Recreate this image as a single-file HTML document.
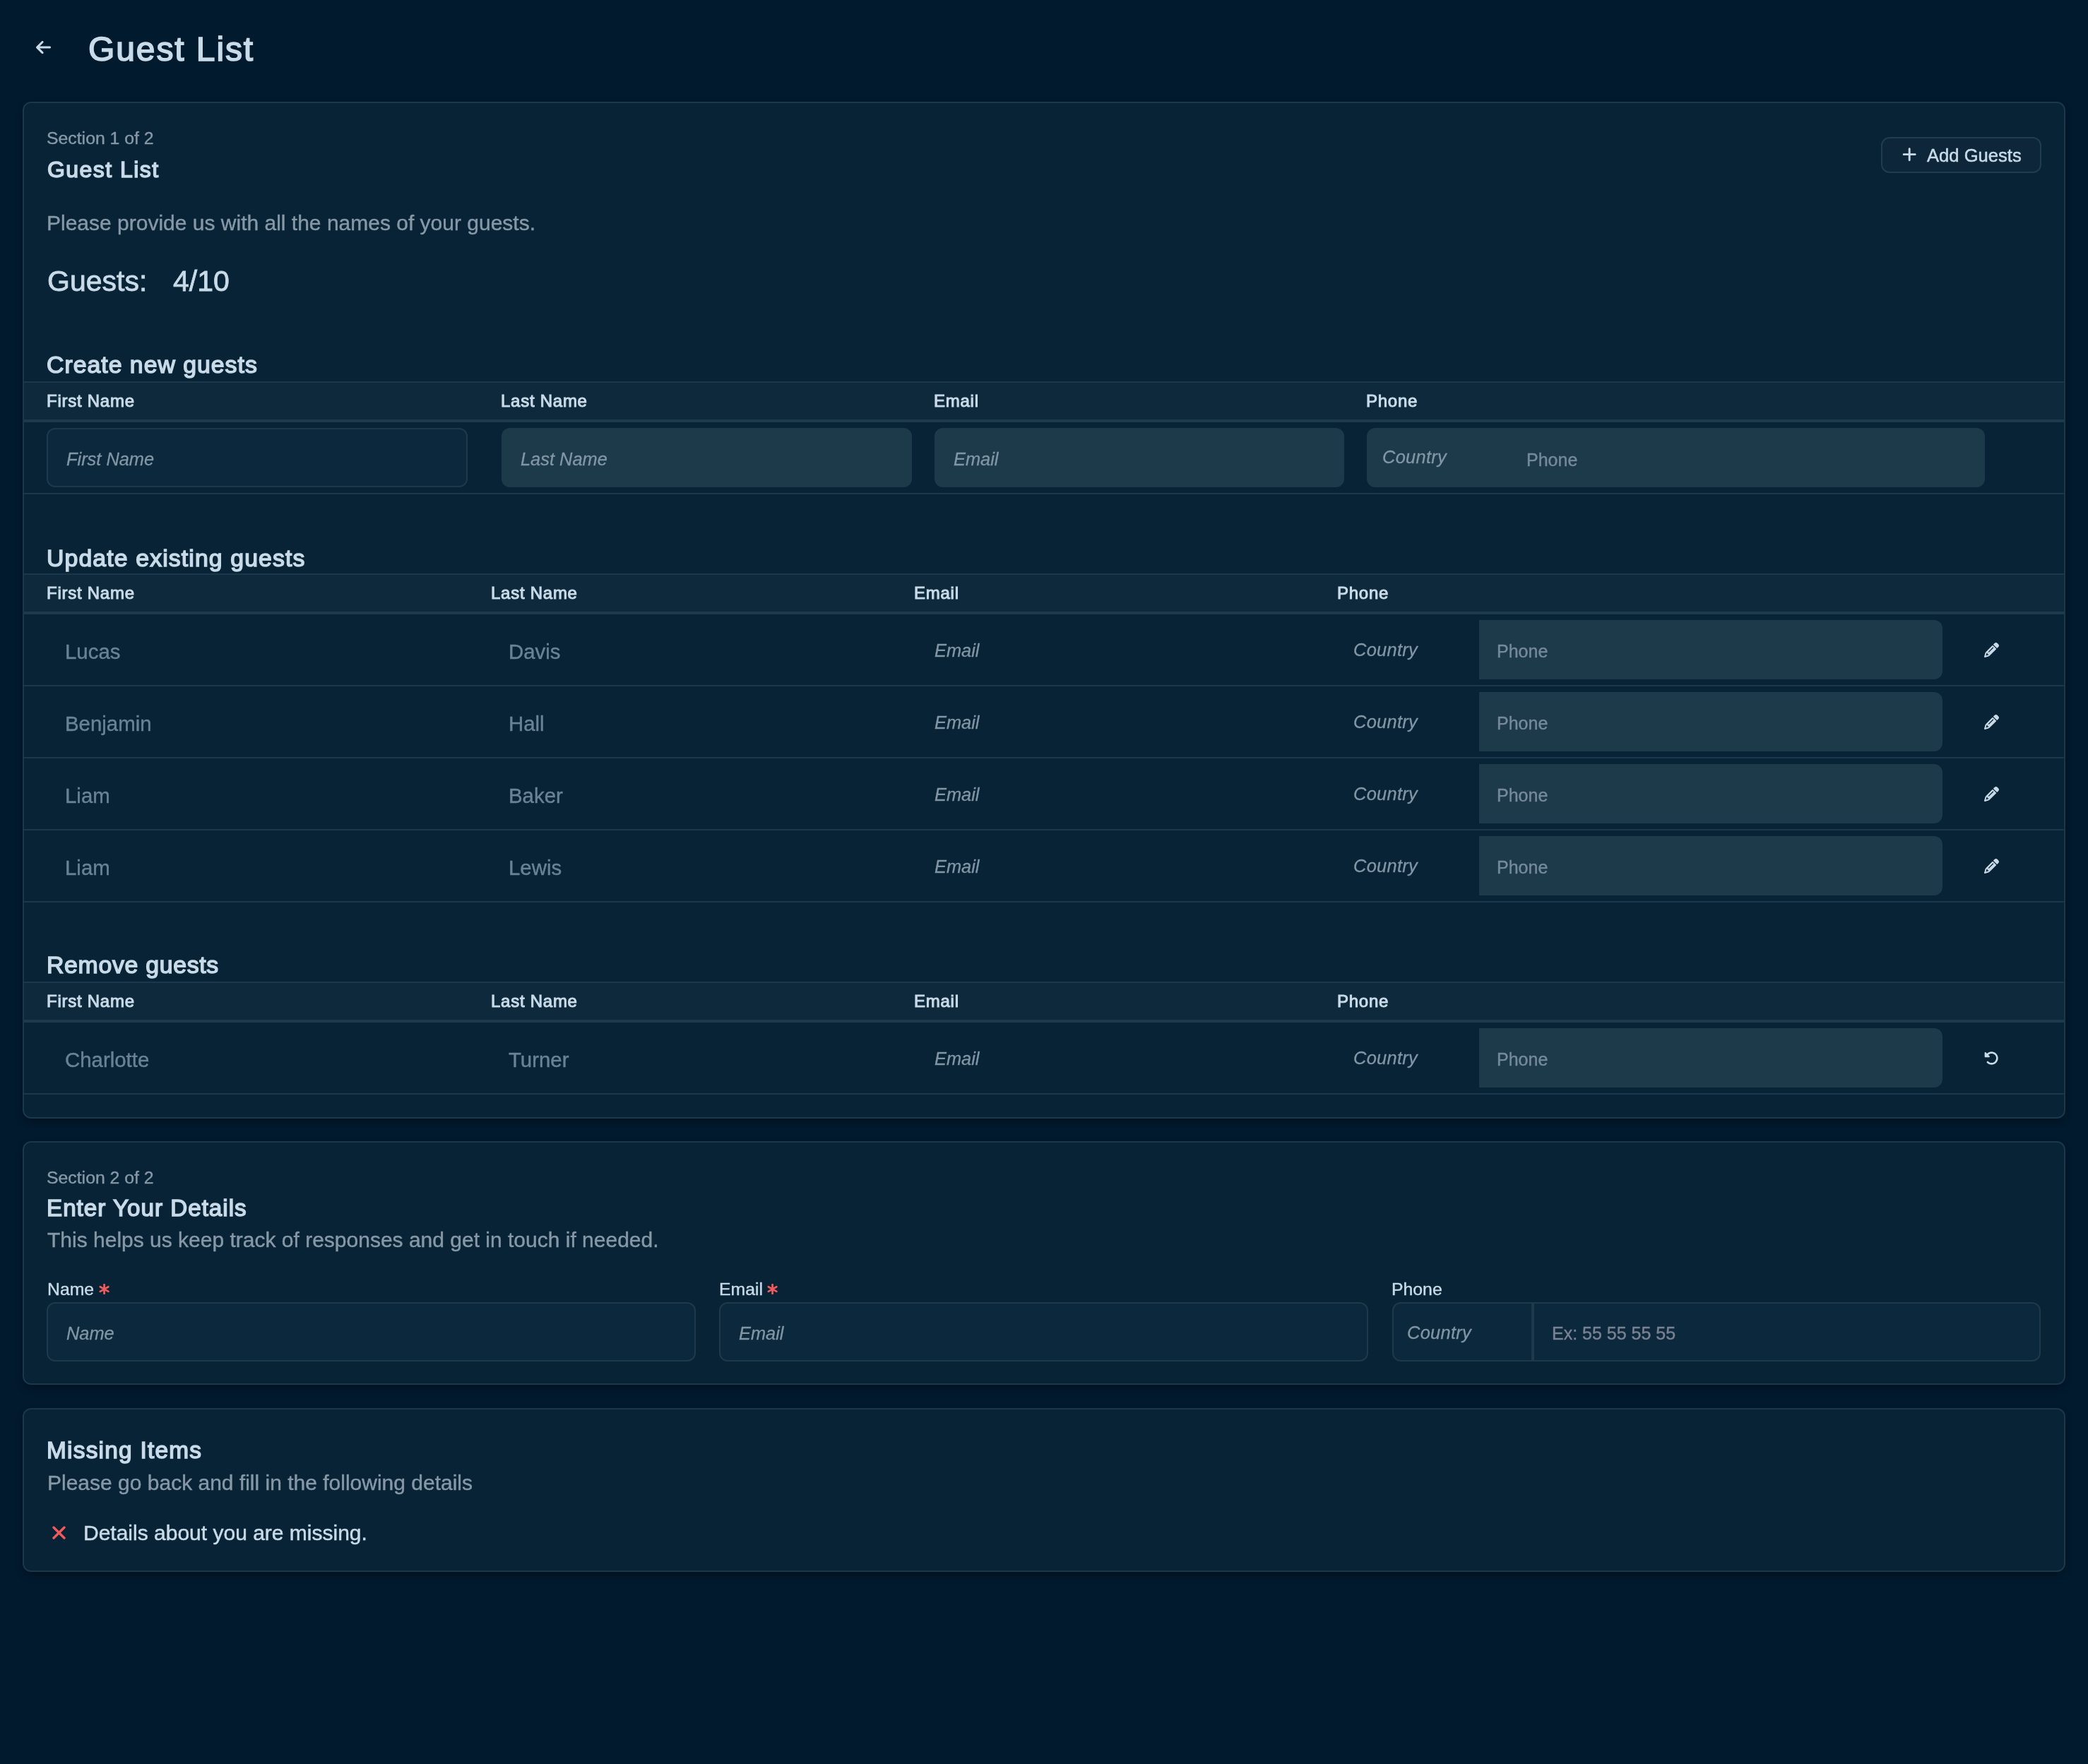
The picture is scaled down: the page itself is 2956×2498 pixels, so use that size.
<!DOCTYPE html>
<html>
<head>
<meta charset="utf-8">
<title>Guest List</title>
<style>
html,body{margin:0;padding:0;}
html{background:#021a2e;}
@media (min-width:2000px){ html{zoom:2;} }
body{width:1478px;height:1249px;position:relative;overflow:hidden;font-family:"Liberation Sans",sans-serif;background:#021a2e;}
.a{position:absolute;white-space:nowrap;line-height:1;will-change:transform;}
.card{position:absolute;left:16px;width:1444px;background:#082336;border:1px solid #1b374b;border-radius:6px;box-shadow:0 3px 6px -1px rgba(0,0,0,.35);}
.hd{position:absolute;left:17px;width:1444px;background:#0e293c;border-top:1px solid #1b374b;border-bottom:2px solid #1d394c;height:26px;}
.rowb{position:absolute;left:17px;width:1444px;height:1px;background:#1b374b;}
.inp{position:absolute;border-radius:6px;background:#1d3a4b;}
.inpb{position:absolute;border-radius:6px;background:#0c283c;border:1px solid #1d394b;box-sizing:border-box;}
.t{color:#c9dbe8;}
.m{color:#8798a7;-webkit-text-stroke:0.2px currentColor;}
.ph{color:#8296a5;font-style:italic;-webkit-text-stroke:0.15px currentColor;}
.nm{color:#6a8394;-webkit-text-stroke:0.2px currentColor;}
.p2{color:#76899a;-webkit-text-stroke:0.2px currentColor;}
.b{font-weight:700;}
.sb{font-weight:400;-webkit-text-stroke:0.75px currentColor;}
</style>
</head>
<body>
<svg class="a" style="left:25.5px;top:27.3px" width="10.6" height="12.1" viewBox="0 0 448 512"><path fill="#c9dbe8" d="M9.4 233.4c-12.5 12.5-12.5 32.8 0 45.3l160 160c12.5 12.5 32.8 12.5 45.3 0s12.5-32.8 0-45.3L109.2 288 416 288c17.7 0 32-14.3 32-32s-14.3-32-32-32l-306.7 0L214.6 118.6c12.5-12.5 12.5-32.8 0-45.3s-32.8-12.5-45.3 0l-160 160z"/></svg>
<div class="a t sb" style="left:62.4px;top:23.2px;font-size:24px;letter-spacing:0.95px;-webkit-text-stroke:0.8px currentColor;">Guest List</div>
<div class="card" style="top:72px;height:718px;"></div>
<div class="a m" style="left:32.8px;top:91.9px;font-size:12.4px;">Section 1 of 2</div>
<div class="a t sb" style="left:33.6px;top:111.9px;font-size:16px;letter-spacing:0.72px;">Guest List</div>
<div class="a" style="left:1331.5px;top:97px;width:113.5px;height:25.5px;box-sizing:border-box;border:1px solid #1f3d52;background:#0d2639;border-radius:6px;"></div>
<svg class="a" style="left:1346.65px;top:103.65px" width="10.2" height="11.67" viewBox="0 0 448 512"><path fill="#c9dbe8" d="M256 80c0-17.7-14.3-32-32-32s-32 14.3-32 32V224H48c-17.7 0-32 14.3-32 32s14.3 32 32 32H192V432c0 17.7 14.3 32 32 32s32-14.3 32-32V288H400c17.7 0 32-14.3 32-32s-14.3-32-32-32H256V80z"/></svg>
<div class="a t" style="left:1364px;top:103.8px;font-size:12.8px;-webkit-text-stroke:0.25px currentColor;">Add Guests</div>
<div class="a m" style="left:33.1px;top:150.7px;font-size:15px;">Please provide us with all the names of your guests.</div>
<div class="a t" style="left:33.5px;top:188.9px;font-size:20.5px;-webkit-text-stroke:0.4px currentColor;">Guests:</div>
<div class="a t" style="left:122.6px;top:188.9px;font-size:20.5px;-webkit-text-stroke:0.4px currentColor;">4/10</div>
<div class="a t sb" style="left:33px;top:250.2px;font-size:16.9px;letter-spacing:0.5px;">Create new guests</div>
<div class="hd" style="top:270px;"></div>
<div class="a t sb" style="left:32.9px;top:277.9px;font-size:12px;letter-spacing:0.37px;-webkit-text-stroke:0.5px currentColor;">First Name</div>
<div class="a t sb" style="left:354.4px;top:277.9px;font-size:12px;letter-spacing:0.37px;-webkit-text-stroke:0.5px currentColor;">Last Name</div>
<div class="a t sb" style="left:660.8px;top:277.9px;font-size:12px;letter-spacing:0.37px;-webkit-text-stroke:0.5px currentColor;">Email</div>
<div class="a t sb" style="left:966.9px;top:277.9px;font-size:12px;letter-spacing:0.37px;-webkit-text-stroke:0.5px currentColor;">Phone</div>
<div class="inpb" style="left:33px;top:303px;width:298px;height:42px;"></div>
<div class="inp" style="left:355px;top:303px;width:290.5px;height:42px;"></div>
<div class="inp" style="left:661.4px;top:303px;width:290px;height:42px;"></div>
<div class="inp" style="left:967.5px;top:303px;width:437.5px;height:42px;"></div>
<div class="a ph" style="left:46.9px;top:319.1px;font-size:12.7px;">First Name</div>
<div class="a ph" style="left:368.7px;top:319.1px;font-size:12.7px;">Last Name</div>
<div class="a ph" style="left:675.1px;top:319.1px;font-size:12.7px;">Email</div>
<div class="a ph" style="left:978.4px;top:317.5px;font-size:12.7px;letter-spacing:0.15px;">Country</div>
<div class="a p2" style="left:1080.5px;top:319.3px;font-size:12.5px;">Phone</div>
<div class="rowb" style="top:349px;"></div>
<div class="a t sb" style="left:33px;top:386.9px;font-size:16.9px;letter-spacing:0.56px;">Update existing guests</div>
<div class="hd" style="top:406px;"></div>
<div class="a t sb" style="left:32.9px;top:413.9px;font-size:12px;letter-spacing:0.37px;-webkit-text-stroke:0.5px currentColor;">First Name</div>
<div class="a t sb" style="left:347.4px;top:413.9px;font-size:12px;letter-spacing:0.37px;-webkit-text-stroke:0.5px currentColor;">Last Name</div>
<div class="a t sb" style="left:646.9px;top:413.9px;font-size:12px;letter-spacing:0.37px;-webkit-text-stroke:0.5px currentColor;">Email</div>
<div class="a t sb" style="left:946.4px;top:413.9px;font-size:12px;letter-spacing:0.37px;-webkit-text-stroke:0.5px currentColor;">Phone</div>
<div class="a nm" style="left:46.2px;top:453.8px;font-size:14.7px;">Lucas</div>
<div class="a nm" style="left:360.2px;top:453.8px;font-size:14.7px;">Davis</div>
<div class="a ph" style="left:661.3px;top:454.7px;font-size:12.7px;">Email</div>
<div class="a ph" style="left:957.9px;top:454.1px;font-size:12.7px;letter-spacing:0.15px;">Country</div>
<div class="inp" style="left:1047px;top:439px;width:328px;height:42px;border-radius:0 6px 6px 0;"></div>
<div class="a p2" style="left:1059.5px;top:454.9px;font-size:12.5px;">Phone</div>
<svg class="a" style="left:1404.7px;top:454.85px" width="10.5" height="10.5" viewBox="0 0 512 512"><path fill="#c9dbe8" d="M410.3 231l11.3-11.3-33.9-33.9-62.1-62.1L291.7 89.8l-11.3 11.3-22.6 22.6L58.6 322.9c-10.4 10.4-18 23.3-22.2 37.4L1 480.7c-2.5 8.4-.2 17.5 6.1 23.7s15.3 8.5 23.7 6.1l120.3-35.4c14.1-4.2 27-11.8 37.4-22.2L387.7 253.7 410.3 231zM160 399.4l-9.1 22.7c-4 3.1-8.5 5.4-13.3 6.9L59.4 452l23-78.1c1.4-4.9 3.800-9.4 6.9-13.3l22.7-9.1v32c0 8.8 7.2 16 16 16h32zM362.7 18.7L348.3 33.2 325.7 55.8 314.3 67.1l33.9 33.9 62.1 62.1 33.9 33.9 11.3-11.3 22.6-22.6 14.5-14.5c25-25 25-65.5 0-90.5L453.3 18.7c-25-25-65.5-25-90.5 0zm-47.4 168l-144 144c-6.2 6.2-16.4 6.2-22.6 0s-6.2-16.4 0-22.6l144-144c6.2-6.2 16.4-6.2 22.6 0s6.2 16.4 0 22.6z"/></svg>
<div class="rowb" style="top:485px;"></div>
<div class="a nm" style="left:46.2px;top:504.8px;font-size:14.7px;">Benjamin</div>
<div class="a nm" style="left:360.2px;top:504.8px;font-size:14.7px;">Hall</div>
<div class="a ph" style="left:661.3px;top:505.7px;font-size:12.7px;">Email</div>
<div class="a ph" style="left:957.9px;top:505.1px;font-size:12.7px;letter-spacing:0.15px;">Country</div>
<div class="inp" style="left:1047px;top:490px;width:328px;height:42px;border-radius:0 6px 6px 0;"></div>
<div class="a p2" style="left:1059.5px;top:505.9px;font-size:12.5px;">Phone</div>
<svg class="a" style="left:1404.7px;top:505.85px" width="10.5" height="10.5" viewBox="0 0 512 512"><path fill="#c9dbe8" d="M410.3 231l11.3-11.3-33.9-33.9-62.1-62.1L291.7 89.8l-11.3 11.3-22.6 22.6L58.6 322.9c-10.4 10.4-18 23.3-22.2 37.4L1 480.7c-2.5 8.4-.2 17.5 6.1 23.7s15.3 8.5 23.7 6.1l120.3-35.4c14.1-4.2 27-11.8 37.4-22.2L387.7 253.7 410.3 231zM160 399.4l-9.1 22.7c-4 3.1-8.5 5.4-13.3 6.9L59.4 452l23-78.1c1.4-4.9 3.800-9.4 6.9-13.3l22.7-9.1v32c0 8.8 7.2 16 16 16h32zM362.7 18.7L348.3 33.2 325.7 55.8 314.3 67.1l33.9 33.9 62.1 62.1 33.9 33.9 11.3-11.3 22.6-22.6 14.5-14.5c25-25 25-65.5 0-90.5L453.3 18.7c-25-25-65.5-25-90.5 0zm-47.4 168l-144 144c-6.2 6.2-16.4 6.2-22.6 0s-6.2-16.4 0-22.6l144-144c6.2-6.2 16.4-6.2 22.6 0s6.2 16.4 0 22.6z"/></svg>
<div class="rowb" style="top:536px;"></div>
<div class="a nm" style="left:46.2px;top:555.8px;font-size:14.7px;">Liam</div>
<div class="a nm" style="left:360.2px;top:555.8px;font-size:14.7px;">Baker</div>
<div class="a ph" style="left:661.3px;top:556.7px;font-size:12.7px;">Email</div>
<div class="a ph" style="left:957.9px;top:556.1px;font-size:12.7px;letter-spacing:0.15px;">Country</div>
<div class="inp" style="left:1047px;top:541px;width:328px;height:42px;border-radius:0 6px 6px 0;"></div>
<div class="a p2" style="left:1059.5px;top:556.9px;font-size:12.5px;">Phone</div>
<svg class="a" style="left:1404.7px;top:556.85px" width="10.5" height="10.5" viewBox="0 0 512 512"><path fill="#c9dbe8" d="M410.3 231l11.3-11.3-33.9-33.9-62.1-62.1L291.7 89.8l-11.3 11.3-22.6 22.6L58.6 322.9c-10.4 10.4-18 23.3-22.2 37.4L1 480.7c-2.5 8.4-.2 17.5 6.1 23.7s15.3 8.5 23.7 6.1l120.3-35.4c14.1-4.2 27-11.8 37.4-22.2L387.7 253.7 410.3 231zM160 399.4l-9.1 22.7c-4 3.1-8.5 5.4-13.3 6.9L59.4 452l23-78.1c1.4-4.9 3.800-9.4 6.9-13.3l22.7-9.1v32c0 8.8 7.2 16 16 16h32zM362.7 18.7L348.3 33.2 325.7 55.8 314.3 67.1l33.9 33.9 62.1 62.1 33.9 33.9 11.3-11.3 22.6-22.6 14.5-14.5c25-25 25-65.5 0-90.5L453.3 18.7c-25-25-65.5-25-90.5 0zm-47.4 168l-144 144c-6.2 6.2-16.4 6.2-22.6 0s-6.2-16.4 0-22.6l144-144c6.2-6.2 16.4-6.2 22.6 0s6.2 16.4 0 22.6z"/></svg>
<div class="rowb" style="top:587px;"></div>
<div class="a nm" style="left:46.2px;top:606.8px;font-size:14.7px;">Liam</div>
<div class="a nm" style="left:360.2px;top:606.8px;font-size:14.7px;">Lewis</div>
<div class="a ph" style="left:661.3px;top:607.7px;font-size:12.7px;">Email</div>
<div class="a ph" style="left:957.9px;top:607.1px;font-size:12.7px;letter-spacing:0.15px;">Country</div>
<div class="inp" style="left:1047px;top:592px;width:328px;height:42px;border-radius:0 6px 6px 0;"></div>
<div class="a p2" style="left:1059.5px;top:607.9px;font-size:12.5px;">Phone</div>
<svg class="a" style="left:1404.7px;top:607.85px" width="10.5" height="10.5" viewBox="0 0 512 512"><path fill="#c9dbe8" d="M410.3 231l11.3-11.3-33.9-33.9-62.1-62.1L291.7 89.8l-11.3 11.3-22.6 22.6L58.6 322.9c-10.4 10.4-18 23.3-22.2 37.4L1 480.7c-2.5 8.4-.2 17.5 6.1 23.7s15.3 8.5 23.7 6.1l120.3-35.4c14.1-4.2 27-11.8 37.4-22.2L387.7 253.7 410.3 231zM160 399.4l-9.1 22.7c-4 3.1-8.5 5.4-13.3 6.9L59.4 452l23-78.1c1.4-4.9 3.800-9.4 6.9-13.3l22.7-9.1v32c0 8.8 7.2 16 16 16h32zM362.7 18.7L348.3 33.2 325.7 55.8 314.3 67.1l33.9 33.9 62.1 62.1 33.9 33.9 11.3-11.3 22.6-22.6 14.5-14.5c25-25 25-65.5 0-90.5L453.3 18.7c-25-25-65.5-25-90.5 0zm-47.4 168l-144 144c-6.2 6.2-16.4 6.2-22.6 0s-6.2-16.4 0-22.6l144-144c6.2-6.2 16.4-6.2 22.6 0s6.2 16.4 0 22.6z"/></svg>
<div class="rowb" style="top:638px;"></div>
<div class="a t sb" style="left:33px;top:675px;font-size:16.9px;letter-spacing:0.35px;">Remove guests</div>
<div class="hd" style="top:695px;"></div>
<div class="a t sb" style="left:32.9px;top:702.9px;font-size:12px;letter-spacing:0.37px;-webkit-text-stroke:0.5px currentColor;">First Name</div>
<div class="a t sb" style="left:347.4px;top:702.9px;font-size:12px;letter-spacing:0.37px;-webkit-text-stroke:0.5px currentColor;">Last Name</div>
<div class="a t sb" style="left:646.9px;top:702.9px;font-size:12px;letter-spacing:0.37px;-webkit-text-stroke:0.5px currentColor;">Email</div>
<div class="a t sb" style="left:946.4px;top:702.9px;font-size:12px;letter-spacing:0.37px;-webkit-text-stroke:0.5px currentColor;">Phone</div>
<div class="a nm" style="left:46.2px;top:742.8px;font-size:14.7px;">Charlotte</div>
<div class="a nm" style="left:360.2px;top:742.8px;font-size:14.7px;">Turner</div>
<div class="a ph" style="left:661.3px;top:743.7px;font-size:12.7px;">Email</div>
<div class="a ph" style="left:957.9px;top:743.1px;font-size:12.7px;letter-spacing:0.15px;">Country</div>
<div class="inp" style="left:1047px;top:728px;width:328px;height:42px;border-radius:0 6px 6px 0;"></div>
<div class="a p2" style="left:1059.5px;top:743.9px;font-size:12.5px;">Phone</div>
<svg class="a" style="left:1404.7px;top:743.85px" width="10.5" height="10.5" viewBox="0 0 512 512"><path fill="#c9dbe8" d="M48.5 224H40c-13.3 0-24-10.7-24-24V72c0-9.700 5.8-18.5 14.8-22.2s19.3-1.7 26.2 5.2L98.6 96.6c87.6-86.5 228.7-86.2 315.8 1c87.5 87.5 87.5 229.3 0 316.8s-229.3 87.5-316.8 0c-12.5-12.5-12.5-32.8 0-45.3s32.8-12.5 45.3 0c62.5 62.5 163.8 62.5 226.3 0s62.5-163.8 0-226.3c-62.2-62.2-162.7-62.5-225.3-1L185 183c6.9 6.9 8.9 17.2 5.2 26.2s-12.5 14.8-22.2 14.8H48.5z"/></svg>
<div class="rowb" style="top:774px;"></div>
<div class="card" style="top:808px;height:170.5px;"></div>
<div class="a m" style="left:32.8px;top:828px;font-size:12.4px;">Section 2 of 2</div>
<div class="a t sb" style="left:32.9px;top:847.2px;font-size:16.6px;letter-spacing:0.5px;">Enter Your Details</div>
<div class="a m" style="left:33.5px;top:870.3px;font-size:15px;">This helps us keep track of responses and get in touch if needed.</div>
<div class="a t" style="left:33.4px;top:906.9px;font-size:12.4px;-webkit-text-stroke:0.2px currentColor;">Name</div>
<div class="a t" style="left:509.1px;top:906.9px;font-size:12.4px;-webkit-text-stroke:0.2px currentColor;">Email</div>
<svg class="a" style="left:69.9px;top:909.1px" width="7.6" height="7.6" viewBox="0 0 10 10"><path d="M5 .6v8.8M1.2 2.8l7.6 4.4M8.8 2.8L1.2 7.2" stroke="#f05a5a" stroke-width="1.8" stroke-linecap="round"/></svg>
<svg class="a" style="left:543.1px;top:909.1px" width="7.6" height="7.6" viewBox="0 0 10 10"><path d="M5 .6v8.8M1.2 2.8l7.6 4.4M8.8 2.8L1.2 7.2" stroke="#f05a5a" stroke-width="1.8" stroke-linecap="round"/></svg>
<div class="a t" style="left:984.9px;top:906.9px;font-size:12.4px;-webkit-text-stroke:0.2px currentColor;">Phone</div>
<div class="inpb" style="left:33px;top:922px;width:459.7px;height:42px;"></div>
<div class="inpb" style="left:509px;top:922px;width:459.7px;height:42px;"></div>
<div class="inpb" style="left:985.4px;top:922px;width:459.2px;height:42px;"></div>
<div class="a" style="left:1084px;top:923px;width:2px;height:40px;background:#1d394b;"></div>
<div class="a ph" style="left:47px;top:938px;font-size:12.7px;">Name</div>
<div class="a ph" style="left:523px;top:938px;font-size:12.7px;">Email</div>
<div class="a ph" style="left:996px;top:937.4px;font-size:12.7px;letter-spacing:0.15px;">Country</div>
<div class="a p2" style="left:1098.5px;top:938px;font-size:12.5px;color:#7a8293;">Ex: 55 55 55 55</div>
<div class="card" style="top:997px;height:114px;"></div>
<div class="a t sb" style="left:32.8px;top:1018.4px;font-size:16.7px;letter-spacing:0.62px;">Missing Items</div>
<div class="a m" style="left:33.4px;top:1042.3px;font-size:15px;">Please go back and fill in the following details</div>
<svg class="a" style="left:37px;top:1080.5px" width="9.5" height="9.5" viewBox="0 0 9.5 9.5"><path d="M1 1l7.5 7.5M8.5 1L1 8.5" stroke="#f05a5a" stroke-width="1.7" stroke-linecap="round"/></svg>
<div class="a t" style="left:58.8px;top:1077.8px;font-size:15px;-webkit-text-stroke:0.25px currentColor;">Details about you are missing.</div>
</body>
</html>
